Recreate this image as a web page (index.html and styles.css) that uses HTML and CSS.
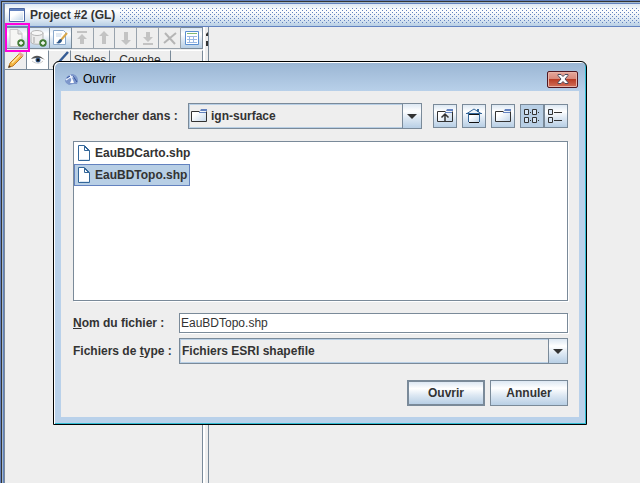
FILE: index.html
```html
<!DOCTYPE html>
<html lang="fr">
<head>
<meta charset="utf-8">
<title>Project #2 (GL)</title>
<link rel="stylesheet" href="styles.css">
</head>
<body>
<svg class="defs" width="0" height="0" aria-hidden="true">
  <defs>
    <linearGradient id="paper" x1="0" y1="0" x2="1" y2="1"><stop offset="0.3" stop-color="#fff"/><stop offset="1" stop-color="#c4d7ea"/></linearGradient>
    <linearGradient id="pen" x1="0" y1="0" x2="1" y2="1"><stop offset="0" stop-color="#ffd45c"/><stop offset="1" stop-color="#e89a2e"/></linearGradient>
    <symbol id="plus" viewBox="0 0 8 8"><circle cx="4" cy="4" r="3.700" fill="#427c35"/><path d="M4 2v4M2 4h4" stroke="#fff" stroke-width="1.300"/></symbol>
    <symbol id="folder" viewBox="0 0 16 16"><path d="M1 4h7l2-2h5v11.500h-14z" fill="url(#paper)"/><path d="M.5 13.500v-10h8M.5 13.500h15v-10" fill="none" stroke="#333"/><path d="M9 3l1-2h6v2z" fill="#6382bf"/><path d="M8 4.500h7" stroke="#6382bf"/></symbol>
    <symbol id="file" viewBox="0 0 14 16"><path d="M1.500.5h6l5 5v10h-11z" fill="#fff" stroke="#336699"/><path d="M7.500 1v4.500h5M8 2l4 4" fill="none" stroke="#336699"/><path d="M3 14.500h9" stroke="#dde8f3"/></symbol>
    <symbol id="down" viewBox="0 0 10 5"><path d="M0 0h10l-5 5z" fill="#333"/></symbol>
  </defs>
</svg>
<main class="frame">
  <header class="frame-title">
    <svg class="window-icon" width="16" height="14" viewBox="0 0 16 14"><path d="M.5.500h15v13h-15z" fill="#fff" stroke="#4b67a3"/><path d="M1 1h14v2h-14z" fill="#6382bf"/><path d="M2 4h12v8h-12z" fill="url(#paper)"/></svg>
    <h1>Project #2 (GL)</h1>
    <span class="grip"></span>
  </header>
  <div class="workspace">
    <aside class="layers">
      <div class="toolbar">
        <button class="tool first" aria-label="Nouvelle couche"><svg width="18" height="18" viewBox="0 0 18 18"><path d="M3 .5h8l4 4v13H3z" fill="#f6f6f4" stroke="#c4c4c4"/><path d="M11 1v4h4" fill="#e8e8e8" stroke="#bbb"/><use href="#plus" x="10" y="10" width="8" height="8"/></svg></button>
        <button class="tool" aria-label="Base de données"><svg width="18" height="18" viewBox="0 0 18 18"><path d="M2 4v9c0 3 12 3 12 0V4" fill="#ececec" stroke="#b4b4b4"/><ellipse cx="8" cy="4" rx="6" ry="2.500" fill="#f7f7f7" stroke="#b4b4b4"/><path d="M5 8v6" stroke="#c8c8c8" stroke-width="2"/><use href="#plus" x="10" y="10" width="8" height="8"/></svg></button>
        <button class="tool" aria-label="Modifier"><svg width="18" height="18" viewBox="0 0 18 18"><path d="M2.500 1.500h10l2 2v12h-12z" fill="#fff" stroke="#8aa9cc"/><path d="M5 5h6M5 7h5" stroke="#c5d6e8"/><path d="M16 4l-6 7" stroke="#d9a648" stroke-width="2"/><path d="M10 10c-3 0-2 3-5 4 3 1 6 0 6-3z" fill="#2d5689"/></svg></button>
        <button class="tool" disabled aria-label="Tout en haut"><svg width="16" height="16" viewBox="0 0 16 16"><path d="M3 1h10v2H3zM8 4l5 5h-3v5H6V9H3z" fill="#c3c3c3"/></svg></button>
        <button class="tool" disabled aria-label="Monter"><svg width="16" height="16" viewBox="0 0 16 16"><path d="M8 1l5 5h-3v8H6V6H3z" fill="#c3c3c3"/></svg></button>
        <button class="tool" disabled aria-label="Descendre"><svg width="16" height="16" viewBox="0 0 16 16"><path d="M8 15l5-5h-3V2H6v8H3z" fill="#c3c3c3"/></svg></button>
        <button class="tool" disabled aria-label="Tout en bas"><svg width="16" height="16" viewBox="0 0 16 16"><path d="M3 13h10v2H3zM8 12l5-5h-3V2H6v5H3z" fill="#c3c3c3"/></svg></button>
        <button class="tool" disabled aria-label="Supprimer"><svg width="16" height="16" viewBox="0 0 16 16"><path d="M3 3l10 11M14 3L2 13" stroke="#b5b5b5" stroke-width="2"/></svg></button>
        <button class="tool" aria-label="Table d'attributs"><svg width="16" height="16" viewBox="0 0 16 16"><path d="M1.500 1.500h13v13h-13z" fill="#fff" stroke="#5b8fd0"/><path d="M3 3.500h10" stroke="#83bb72"/><path d="M3 6.500h10M3 9.500h10M3 12.500h10M5.500 6v7M9.500 6v7" stroke="#9bb9e4"/></svg></button>
      </div>
      <table class="layer-table">
        <thead><tr>
          <th class="c-icon"><svg width="18" height="18" viewBox="0 0 18 18"><path d="M2 16l1-4L13 2l3 3L6 15z" fill="url(#pen)" stroke="#c17a22"/><path d="M5 12L13 4" stroke="#ffe8a0" stroke-width="1.500"/><path d="M13 1l4 3-2 2-4-3z" fill="#e9a596"/><path d="M1 17l1-3 2 2z" fill="#5a3a1b"/></svg></th>
          <th class="c-icon white"><svg width="14" height="10" viewBox="0 0 14 10"><path d="M0 4c4-5 9-4 14 1-4-2-4-2-6-2C5 3 3 3 0 4z" fill="#555"/><path d="M1 6c4 3 8 3 11 0" fill="none" stroke="#ccc"/><circle cx="7" cy="5" r="2.500" fill="#3b6296"/><circle cx="7" cy="5" r="1.500" fill="#111"/></svg></th>
          <th class="c-icon"><svg width="18" height="18" viewBox="0 0 18 18"><path d="M17 1L8 11" stroke="#355b94" stroke-width="2.500"/><path d="M8 10c-4 0-3 5-7 6 5 1 8 0 8-4z" fill="#333"/></svg></th>
          <th class="c-styles">Styles</th><th>Couche</th><th class="c-last"></th>
        </tr></thead>
      </table>
      <div class="layer-body"></div>
    </aside>
    <div class="divider"><svg width="4" height="18" viewBox="0 0 4 18"><path d="M4 1v4H2V3zM2 10h2v5H2z" fill="#333"/></svg></div>
    <section class="map"></section>
  </div>
</main>
<div class="highlight"></div>

<section class="dialog" role="dialog" aria-labelledby="dialog-title">
  <header class="dialog-title">
    <svg width="13" height="13" viewBox="0 0 13 13"><path d="M0 8C1 3 5 1 8 1c3 1 5 3 5 7l-1 3H8l-4 1-3-2z" fill="#7d97cb"/><path d="M1 7c3-3 5-4 8-3M5 2l3 7" fill="none" stroke="#e7eefc" stroke-width="1.500"/><path d="M7 6l2 4H5z" fill="#fff"/><path d="M8 3l4 6M2 5l3-2" fill="none" stroke="#3656a0"/></svg>
    <h2 id="dialog-title">Ouvrir</h2>
    <button class="close" aria-label="Fermer"><svg width="12" height="10" viewBox="0 0 12 10"><path d="M1 .5h3l2 2 2-2h3v1L8 5l3 3.500v1H8l-2-2-2 2H1v-1L4 5 1 1.500z" fill="#fff" stroke="#4b4b5d"/></svg></button>
  </header>
  <form class="dialog-body">
    <div class="look-row">
      <label for="folder-select">Rechercher dans :</label>
      <div class="combo look-combo">
        <svg class="combo-icon" width="16" height="16"><use href="#folder"/></svg>
        <select id="folder-select"><option>ign-surface</option></select>
        <span class="combo-arrow"><svg width="10" height="5"><use href="#down"/></svg></span>
      </div>
      <button type="button" class="nav" aria-label="Dossier parent"><svg width="16" height="16" viewBox="0 0 16 16"><use href="#folder" width="16" height="16"/><path d="M4.500 9.500L8 6l3.500 3.500M8 7v7" fill="none" stroke="#333" stroke-width="1.500"/></svg></button>
      <button type="button" class="nav" aria-label="Accueil"><svg width="16" height="16" viewBox="0 0 16 16"><path d="M1 5.500L8 1l7 4.500z" fill="#eef4fa" stroke="#336699"/><path d="M12 1v3" stroke="#336699" stroke-width="2"/><path d="M0 5.500h16" stroke="#336699"/><path d="M3 6h10v8H3z" fill="url(#paper)"/><path d="M2.500 6v8M13.500 6v8" stroke="#336699"/><path d="M3 14.500h10M3 6.500h10" stroke="#111"/></svg></button>
      <button type="button" class="nav" aria-label="Nouveau dossier"><svg width="16" height="16"><use href="#folder"/></svg></button>
      <div class="views">
        <button type="button" class="nav selected" aria-label="Liste"><svg width="16" height="16" viewBox="0 0 16 16"><path d="M.5 1.500h4v5h-4zM8.500 1.500h4v5h-4zM.5 9.500h4v5h-4zM8.500 9.500h4v5h-4z" fill="#d9e7f6" stroke="#333"/><path d="M6 4.500h1M14 4.500h1M6 12.500h1M14 12.500h1" stroke="#333"/></svg></button>
        <button type="button" class="nav" aria-label="Détails"><svg width="16" height="16" viewBox="0 0 16 16"><path d="M.5 1.500h4v5h-4zM.5 9.500h4v5h-4z" fill="#d9e7f6" stroke="#333"/><path d="M6 4.500h8M6 12.500h8" stroke="#333"/></svg></button>
      </div>
    </div>
    <ul class="files">
      <li><button type="button" class="file"><svg width="14" height="16"><use href="#file"/></svg>EauBDCarto.shp</button></li>
      <li><button type="button" class="file chosen"><svg width="14" height="16"><use href="#file"/></svg>EauBDTopo.shp</button></li>
    </ul>
    <div class="fields">
      <label for="file-name"><u>N</u>om du fichier :</label>
      <input id="file-name" type="text" value="EauBDTopo.shp">
      <label for="file-type">Fichiers de <u>t</u>ype :</label>
      <div class="combo">
        <select id="file-type"><option>Fichiers ESRI shapefile</option></select>
        <span class="combo-arrow"><svg width="10" height="5"><use href="#down"/></svg></span>
      </div>
    </div>
    <div class="actions">
      <button type="button" class="push default">Ouvrir</button>
      <button type="button" class="push">Annuler</button>
    </div>
  </form>
</section>
</body>
</html>
```
FILE: styles.css
```css
* { box-sizing: border-box; }

:root {
  --line: #7a8a99;
  --blue: #6382bf;
  --pale: #b8cfe5;
  --face: #eeeeee;
  --metal: linear-gradient(#dde8f3, #ffffff 30%, #dde8f3 60%, #b8cfe5);
}

body {
  margin: 0;
  min-height: 100vh;
  display: flex;
  background: var(--blue);
  color: #333333;
  font: bold 12px/16px "Liberation Sans", Arial, sans-serif;
}

h1, h2 { margin: 0; font-size: inherit; }
svg { display: block; flex: none; }
.defs { position: absolute; }

button, input, select {
  margin: 0;
  padding: 0;
  border: 0;
  border-radius: 0;
  color: inherit;
  font: inherit;
}

/* Internal frame */
.frame {
  flex: 1;
  display: flex;
  flex-direction: column;
  margin: 1px 0 0 1px;
  border-top: 1px solid #333333;
  border-left: 1px solid #333333;
  background: var(--face);
  box-shadow: inset 1px 1px #a3b8cc, inset 2px 2px var(--blue), inset 3px 3px var(--line);
  padding: 2px 0 0 3px;
}

.frame-title {
  height: 23px;
  display: flex;
  align-items: center;
  padding-left: 4px;
  border-bottom: 1px solid var(--blue);
  background: linear-gradient(#dde8f3, #ffffff 30%, #dde8f3 70%, #b8cfe5);
}

h1 { margin: 0 5px 0 5px; }

.grip {
  flex: 1;
  height: 15px;
  background:
    conic-gradient(from 0deg at 1px 1px, transparent 75%, var(--blue) 0) 0 0 / 4px 4px,
    conic-gradient(from 0deg at 1px 1px, transparent 75%, var(--blue) 0) 2px 2px / 4px 4px;
}

.workspace { flex: 1; display: flex; }
.layers { width: 198px; display: flex; flex-direction: column; }
.toolbar { display: flex; }

.tool {
  flex: 1;
  height: 22px;
  display: grid;
  place-items: center;
  border: 1px solid var(--line);
  border-left-width: 0;
  background: var(--metal);
}
.tool.first { border-left-width: 1px; }
.tool:disabled { background: var(--face); border-color: #99a3ad; }

.layer-table {
  width: 100%;
  margin-top: 1px;
  border-collapse: separate;
  border-spacing: 0;
  table-layout: fixed;
}
.layer-table th {
  height: 20px;
  padding: 0;
  border-right: 1px solid var(--line);
  border-bottom: 1px solid var(--line);
  border-top: 1px solid #ffffff;
  font-weight: normal;
}
.layer-table svg { margin: auto; }
.c-icon { width: 22px; }
.c-styles { width: 39px; }
.c-last { width: 32px; }
.white { background: #ffffff; }

.layer-body { flex: 1; border-right: 1px solid var(--line); }

.divider {
  width: 6px;
  display: flex;
  justify-content: flex-end;
  padding-top: 4px;
  border-right: 1px solid var(--line);
  border-left: 2px solid #ffffff;
}
.map { flex: 1; }

.highlight {
  position: absolute;
  left: 5px;
  top: 23px;
  width: 25px;
  height: 29px;
  border: 2px solid #ff00dd;
}

/* Dialog window */
.dialog {
  position: absolute;
  left: 53px;
  right: 53px;
  top: 61px;
  padding: 0 7px 7px;
  border: 1px solid #000000;
  border-radius: 6px 6px 0 0;
  background: linear-gradient(#9ab5d3, #b9d1ea 30px);
  box-shadow: inset 1px 1px #ffffff, inset -1px -1px #30bcd2;
}

.dialog-title {
  height: 29px;
  display: flex;
  align-items: center;
  padding: 5px 1px 0 4px;
  color: #000000;
}
.dialog-title h2 { margin-left: 5px; font-weight: normal; }

.close {
  width: 31px;
  height: 17px;
  display: grid;
  place-items: center;
  margin-left: auto;
  border: 1px solid #501822;
  border-radius: 2px;
  background: linear-gradient(#e6a79b, #d98a7c 45%, #b93d26 50%, #d2705a);
  box-shadow: inset 0 0 0 1px #e8b3a8;
}

.dialog-body {
  display: flex;
  flex-direction: column;
  padding: 12px 11px 11px 12px;
  background: var(--face);
}

.look-row { display: flex; align-items: center; gap: 5px; }
.look-row label { width: 110px; }
.look-combo { flex: 1; margin-right: 6px; }

.combo {
  height: 26px;
  display: flex;
  align-items: center;
  border: 1px solid var(--line);
  box-shadow: inset 0 0 0 1px var(--pale);
}
.combo-icon { margin-left: 2px; }
.combo select {
  flex: 1;
  min-width: 0;
  height: 22px;
  padding-left: 2px;
  appearance: none;
  background: transparent;
  outline: 0;
}
.look-combo select { padding-left: 4px; }
.combo-arrow {
  width: 19px;
  align-self: stretch;
  display: grid;
  place-items: center;
  border-left: 1px solid var(--line);
  background: var(--metal);
}

.nav {
  width: 24px;
  height: 24px;
  display: grid;
  place-items: center;
  border: 1px solid var(--line);
  background: var(--metal);
}
.nav.selected { background: var(--pale); }
.views { display: flex; }

.files {
  height: 160px;
  margin: 12px 0 0;
  padding: 0;
  border: 1px solid var(--line);
  background: #ffffff;
  box-shadow: 1px 1px #ffffff;
  list-style: none;
}
.file {
  height: 22px;
  display: flex;
  align-items: center;
  gap: 4px;
  padding: 0 2px;
  border: 1px solid transparent;
  background: transparent;
}
.file.chosen { border-color: var(--blue); background: var(--pale); }

.fields {
  display: grid;
  grid-template-columns: 106px 1fr;
  align-items: center;
  row-gap: 5px;
  margin-top: 12px;
}
.fields input {
  height: 20px;
  padding: 0 1px;
  border: 1px solid var(--line);
  background: #ffffff;
  box-shadow: 1px 1px #ffffff;
  font-weight: normal;
  outline: 0;
}

.actions { display: flex; justify-content: flex-end; gap: 5px; margin-top: 16px; }
.push {
  width: 78px;
  height: 26px;
  border: 1px solid var(--line);
  background: var(--metal);
}
.push.default { border-width: 2px; }
```
